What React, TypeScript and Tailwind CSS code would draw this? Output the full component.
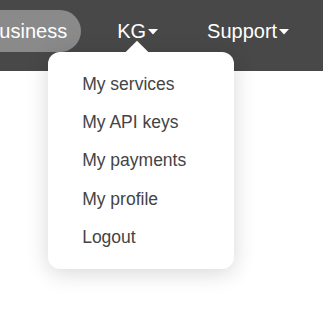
import React from "react";

const Caret = () => (
  <svg width="10" height="6" viewBox="0 0 10 6" className="ml-[2px] mt-[3px]">
    <path d="M0 0 L10 0 L5 5.5 Z" fill="#fff" />
  </svg>
);

const items = ["My services", "My API keys", "My payments", "My profile", "Logout"];

export default function App() {
  return (
    <div className="w-[323px] h-[323px] bg-white overflow-hidden relative" style={{ fontFamily: '"Liberation Sans", Arial, sans-serif' }}>
      {/* top bar */}
      <header className="h-[71px] bg-[#484848] flex items-center text-white text-[20px]">
        <div className="-ml-[28px] h-[42px] mt-[-10px] px-[14px] rounded-full bg-[#8a8a8a] flex items-center">
          Business
        </div>
        <div className="relative ml-[36px] mt-[-10px] flex items-center">
          KG
          <Caret />
          {/* dropdown */}
          <div className="absolute left-[-69px] top-[36px] w-[186px] bg-white rounded-[12px] shadow-[0_4px_22px_rgba(0,0,0,0.16)] py-[13px] z-10">
            {/* pointer */}
            <div className="absolute left-[81px] top-[-8px] w-[16px] h-[16px] bg-white rotate-45" />
            {items.map((t) => (
              <div key={t} className="relative h-[38.4px] flex items-center pl-[34px] text-[17.5px] text-[#444]">
                {t}
              </div>
            ))}
          </div>
        </div>
        <div className="ml-[49px] mt-[-10px] flex items-center">
          Support
          <Caret />
        </div>
      </header>
    </div>
  );
}
